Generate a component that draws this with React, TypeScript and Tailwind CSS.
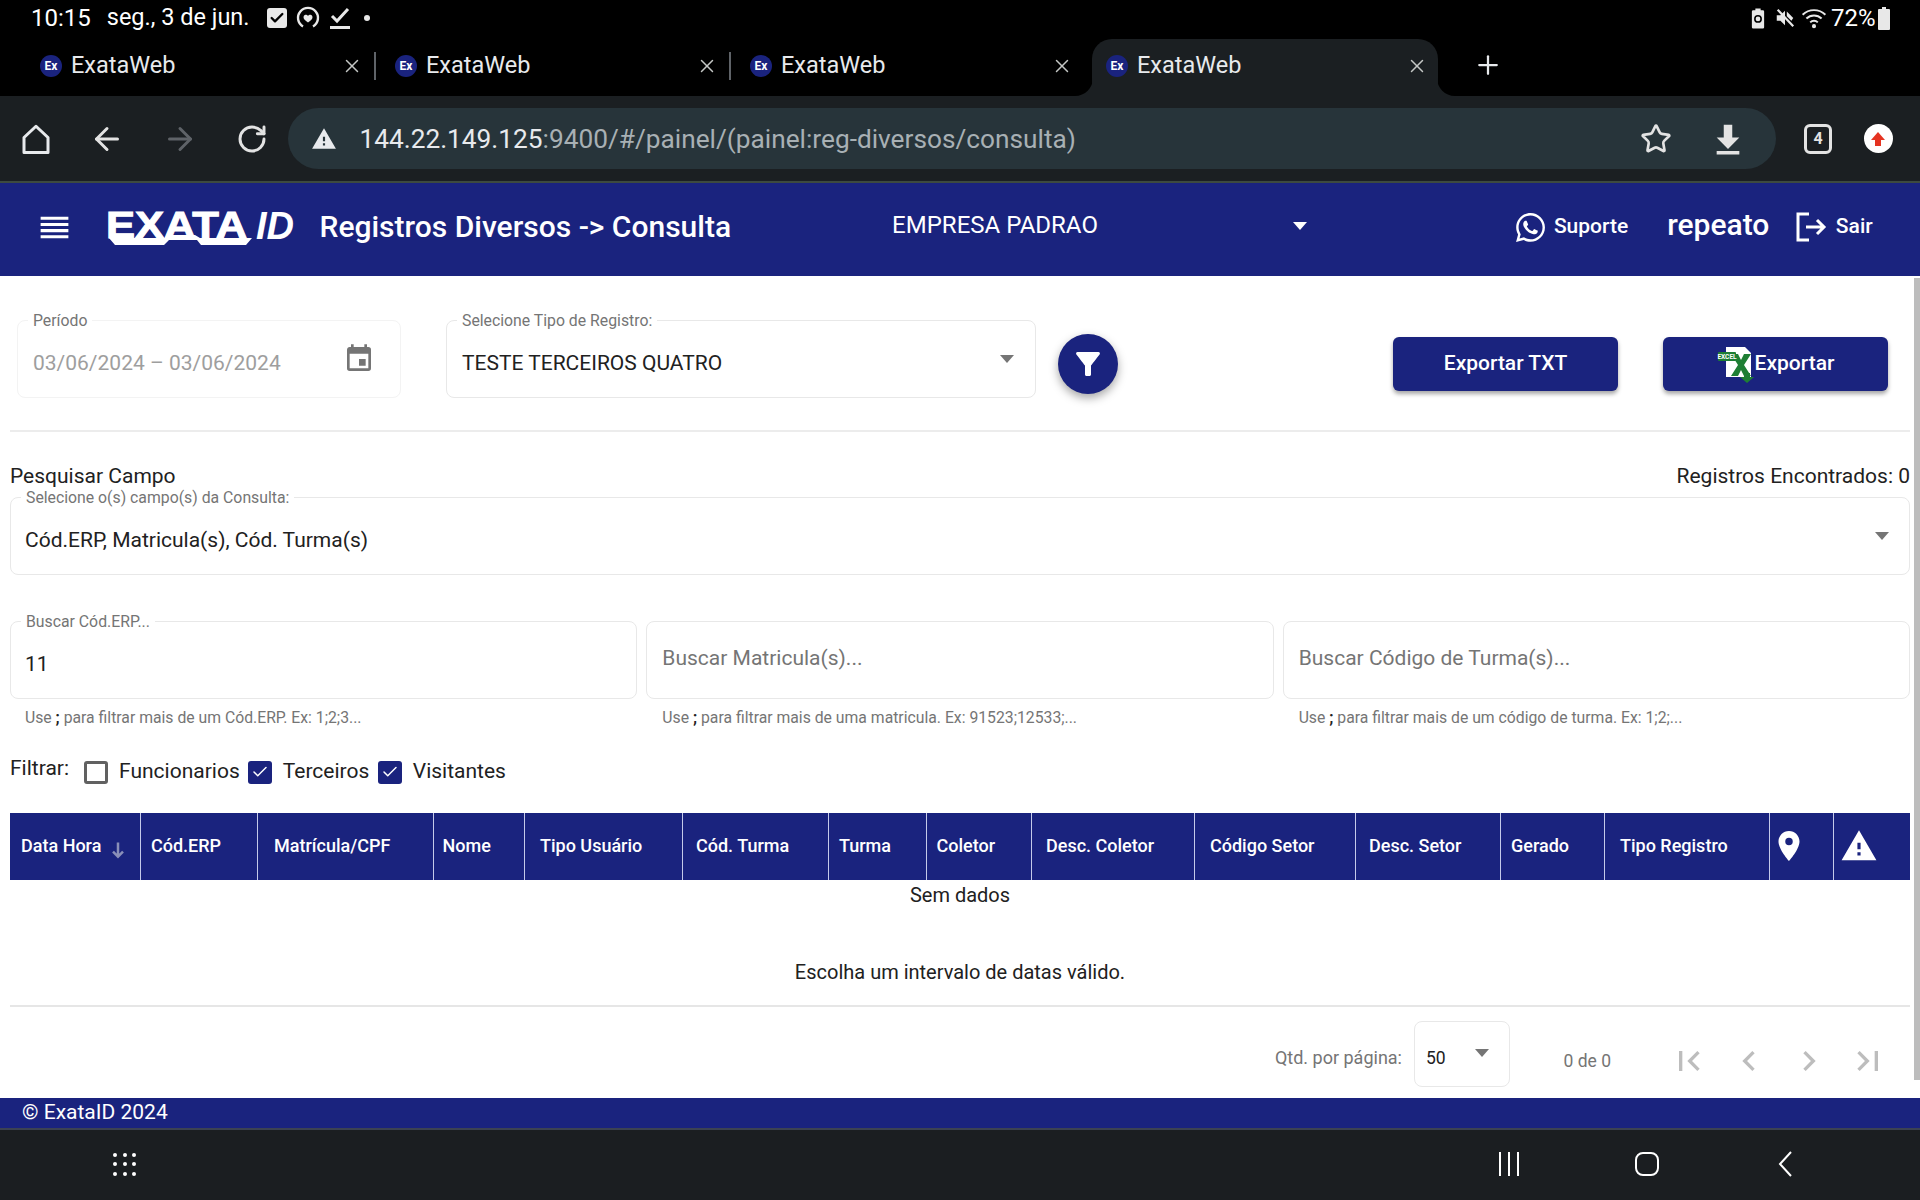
import { ReactNode } from 'react';
import { ArrowLeft, ArrowRight, Check, Plus, RotateCw, Star, X } from 'lucide-react';
import { FaWhatsapp } from 'react-icons/fa';

const tabs = [
  { w: 'w-[355px]', active: false },
  { w: 'w-[355px]', active: false },
  { w: 'w-[355px]', active: false },
];

const columns = [
  { label: 'Data Hora', cls: 'w-[131px] pl-[11px]', sort: true },
  { label: 'Cód.ERP', cls: 'w-[117px] pl-[10px]' },
  { label: 'Matrícula/CPF', cls: 'w-[175.5px] pl-[16px]' },
  { label: 'Nome', cls: 'w-[91.5px] pl-[9px]' },
  { label: 'Tipo Usuário', cls: 'w-[158px] pl-[15px]' },
  { label: 'Cód. Turma', cls: 'w-[146px] pl-[13px]' },
  { label: 'Turma', cls: 'w-[97.5px] pl-[10px]' },
  { label: 'Coletor', cls: 'w-[105.5px] pl-[10px]' },
  { label: 'Desc. Coletor', cls: 'w-[163px] pl-[14px]' },
  { label: 'Código Setor', cls: 'w-[161px] pl-[15px]' },
  { label: 'Desc. Setor', cls: 'w-[145px] pl-[13px]' },
  { label: 'Gerado', cls: 'w-[104px] pl-[10px]' },
  { label: 'Tipo Registro', cls: 'w-[164.5px] pl-[15px]' },
];

function Material({ d, className }: { d: string; className?: string }) {
  return (
    <svg viewBox="0 0 24 24" fill="currentColor" className={className}>
      <path d={d} />
    </svg>
  );
}

function Caret({ className }: { className?: string }) {
  return (
    <svg viewBox="0 0 14 8" fill="currentColor" className={className}>
      <path d="M0 0h14L7 8z" />
    </svg>
  );
}

function Favicon() {
  return (
    <span className="w-[22px] h-[22px] rounded-full bg-[#1a237e] flex items-center justify-center text-white text-[12px] font-bold leading-none shrink-0">
      Ex
    </span>
  );
}

function Tab({ w, last }: { w: string; last?: boolean }) {
  return (
    <div className={`${w} h-[57px] flex items-center pl-[19px] pb-[3px]`}>
      <Favicon />
      <span className="ml-[9px] text-[23.5px] text-[#e8eaed]">ExataWeb</span>
      <X className="ml-auto w-[22px] h-[22px] text-[#c4c7c5]" strokeWidth={1.6} />
      <span className={`ml-[11.5px] w-[2px] h-[28px] ${last ? 'bg-transparent' : 'bg-[#5f6368]'}`} />
    </div>
  );
}

function Logo() {
  return (
    <div className="relative w-[190px] h-[38px] ml-[33.5px] text-white">
      <div className="flex items-start font-['Liberation_Sans',sans-serif] text-[36px] leading-[36px]">
        <span className="w-[150px] font-bold origin-left scale-x-[1.21] [-webkit-text-stroke:1px_white]">EXATA</span>
        <span className="text-[38px] leading-[36px] font-bold italic">ID</span>
      </div>
      <svg viewBox="0 0 190 38" className="absolute left-0 top-0 w-[190px] h-[38px]" fill="#ffffff">
        <path d="M3 30h56l6-3h24l5 3h52l-6 7H95l-4-5H63l-5 5H9z" />
      </svg>
    </div>
  );
}

function Field({
  label,
  className,
  children,
}: {
  label?: string;
  className?: string;
  children: ReactNode;
}) {
  return (
    <div className={`relative border-[1.5px] rounded-[8px] flex items-center ${className}`}>
      {label && (
        <span className="absolute left-[10px] -top-[9px] px-[5px] bg-white text-[15.8px] leading-[18px] text-[#757575] whitespace-nowrap">
          {label}
        </span>
      )}
      {children}
    </div>
  );
}

function Checkbox({ label, checked }: { label: string; checked?: boolean }) {
  return (
    <div className="flex items-center">
      {checked ? (
        <span className="w-[24px] h-[23px] rounded-[3px] bg-[#1a237e] flex items-center justify-center">
          <Check className="w-[18px] h-[18px] text-white" strokeWidth={2} />
        </span>
      ) : (
        <span className="w-[24px] h-[23px] rounded-[3px] border-[3px] border-[#616161]" />
      )}
      <span className="ml-[11px] text-[21px] text-[#212121]">{label}</span>
    </div>
  );
}

function ExcelIcon() {
  return (
    <svg viewBox="0 0 38 38" className="w-[38px] h-[38px] shrink-0">
      <path d="M9 2h19l6 6v24H9z" fill="#ffffff" />
      <path d="M14 11h7l3 6 3-6h7l-7 11 7 11h-7l-3-6-3 6h-7l7-11z" fill="#1e7e34" transform="translate(0 -2)" />
      <rect x="1" y="7" width="18" height="9" rx="1" fill="#1e7e34" />
      <text x="10" y="14" textAnchor="middle" fontSize="6.5" fontWeight="700" fill="#ffffff" fontFamily="Roboto, sans-serif">
        EXCEL
      </text>
      <path d="M27 28h6v4h4l-7 6-7-6h4z" fill="#1e7e34" />
    </svg>
  );
}

export default function App() {
  return (
    <div className="w-[1920px] h-[1200px] overflow-hidden relative flex flex-col bg-white font-['Roboto',sans-serif]">
      {/* Status bar */}
      <div className="h-[39px] bg-black text-white flex items-center pl-[31px] pr-[30.5px] pb-[3px] shrink-0">
        <span className="text-[24px] leading-none">10:15</span>
        <span className="ml-[16px] text-[23.5px] leading-none">seg., 3 de jun.</span>
        <span className="ml-[17px] w-[20px] h-[20px] rounded-[3px] bg-[#e8e8e8] flex items-center justify-center">
          <Check className="w-[16px] h-[16px] text-black" strokeWidth={3.5} />
        </span>
        <svg viewBox="0 0 24 24" className="ml-[9px] w-[24px] h-[24px]" fill="none" stroke="#e8e8e8" strokeWidth="2.4">
          <path d="M7 20.5A10 10 0 1 1 17 20.5" />
          <path d="M12 16.5c-3-2-4.5-3.6-4.5-5.5a2.4 2.4 0 0 1 4.5-1 2.4 2.4 0 0 1 4.5 1c0 1.900-1.500 3.500-4.500 5.500z" fill="#e8e8e8" stroke="none" />
        </svg>
        <svg viewBox="0 0 24 24" className="ml-[8px] w-[24px] h-[24px]" fill="none" stroke="#e8e8e8" strokeWidth="3">
          <path d="M4 10l5 5L20 3" />
          <path d="M2 21.500h20" />
        </svg>
        <span className="ml-[12px] w-[6px] h-[6px] rounded-full bg-[#e8e8e8]" />
        <div className="ml-auto flex items-center">
          <svg viewBox="0 0 16 24" className="w-[14px] h-[22px]" fill="#e8e8e8">
            <path d="M5 1h6v2h2.500A1.500 1.500 0 0 1 15 4.500v18a1.500 1.500 0 0 1-1.500 1.500h-11A1.500 1.500 0 0 1 1 22.500v-18A1.500 1.500 0 0 1 2.500 3H5z" />
            <circle cx="8" cy="13" r="3.600" fill="none" stroke="#000" strokeWidth="1.800" />
          </svg>
          <svg viewBox="0 0 24 24" className="ml-[9px] w-[22px] h-[22px]" fill="#e8e8e8">
            <path d="M3 9v6h4l5 5V4L7 9z" />
            <path d="M4 3l17 18" stroke="#e8e8e8" strokeWidth="2.400" />
            <path d="M14 5l7 7-2 3-5-5z" />
          </svg>
          <svg viewBox="0 0 24 24" className="ml-[5px] w-[26px] h-[26px]" fill="none" stroke="#e8e8e8" strokeWidth="1.800">
            <path d="M1.500 9a15 15 0 0 1 21 0" />
            <path d="M5 12.500a10 10 0 0 1 14 0" />
            <path d="M8.500 16a5 5 0 0 1 7 0" />
            <circle cx="12" cy="19.500" r="1" fill="#e8e8e8" />
          </svg>
          <span className="ml-[3.5px] text-[24px] leading-none">72%</span>
          <svg viewBox="0 0 12 24" className="ml-[2px] w-[12px] h-[24px]" fill="#e8e8e8">
            <path d="M4 1h4v2h3a1 1 0 0 1 1 1v19a1 1 0 0 1-1 1H1a1 1 0 0 1-1-1V4a1 1 0 0 1 1-1h3z" />
          </svg>
        </div>
      </div>

      {/* Browser tabs */}
      <div className="h-[57px] bg-black flex items-start pl-[21px] shrink-0">
        {tabs.map((t, i) => (
          <Tab key={i} w={t.w} last={i === 2} />
        ))}
        <div className="relative ml-[6px] w-[346px] h-[57px] bg-[#1b1f22] rounded-t-[20px] flex items-center pl-[14px] pr-[10px] pb-[3px]">
          <svg viewBox="0 0 18 18" className="absolute -left-[17px] bottom-0 w-[18px] h-[18px]" fill="#1b1f22">
            <path d="M18 0v18H0c10 0 18-8 18-18z" />
          </svg>
          <svg viewBox="0 0 18 18" className="absolute -right-[17px] bottom-0 w-[18px] h-[18px]" fill="#1b1f22">
            <path d="M0 0v18h18C8 18 0 10 0 0z" />
          </svg>
          <Favicon />
          <span className="ml-[9px] text-[23.5px] text-[#e8eaed]">ExataWeb</span>
          <X className="ml-auto w-[22px] h-[22px] text-[#c4c7c5]" strokeWidth={1.6} />
        </div>
        <Plus className="ml-[35px] mt-[11px] w-[30px] h-[30px] text-[#e8eaed]" strokeWidth={1.8} />
      </div>

      {/* Browser toolbar */}
      <div className="h-[85px] bg-[#1b1f22] flex items-center pl-[18px] shrink-0 text-[#e3e3e3]">
        <svg viewBox="0 0 24 24" className="w-[36px] h-[36px]" fill="none" stroke="#e8eaed" strokeWidth="2">
          <path d="M12 3.500L4 11v10h16V11z" strokeLinejoin="round" />
        </svg>
        <ArrowLeft className="ml-[35px] w-[36px] h-[36px]" strokeWidth={2} />
        <ArrowRight className="ml-[37px] w-[36px] h-[36px] text-[#5f6368]" strokeWidth={2} />
        <RotateCw className="ml-[38px] w-[32px] h-[32px]" strokeWidth={2.2} />
        <div className="ml-[19.5px] w-[1488px] h-[61px] rounded-full bg-[#27343a] flex items-center pl-[23px] pr-[31px]">
          <Material d="M1 21h22L12 2 1 21zm12-3h-2v-2h2v2zm0-4h-2v-4h2v4z" className="w-[26px] h-[26px] text-[#e8eaed]" />
          <span className="ml-[23px] mt-[2px] text-[26.25px] whitespace-nowrap">
            <span className="text-[#e8eaed]">144.22.149.125</span>
            <span className="text-[#a8b0b4]">:9400/#/painel/(painel:reg-diversos/consulta)</span>
          </span>
          <Star className="ml-auto mr-[-1px] w-[32px] h-[32px]" strokeWidth={2} />
          <svg viewBox="0 0 24 24" className="ml-[40px] w-[34px] h-[34px]" fill="#e3e3e3">
            <path d="M9 2h6v9h5l-8 8-8-8h5zM4 20.500h16V23H4z" />
          </svg>
        </div>
        <div className="ml-[28.5px] w-[28px] h-[30px] rounded-[6px] border-[3px] border-[#e3e3e3] flex items-center justify-center text-[16px] font-bold leading-none">
          4
        </div>
        <div className="ml-[31.5px] w-[29px] h-[29px] rounded-full bg-white flex items-center justify-center">
          <svg viewBox="0 0 16 16" className="w-[16px] h-[16px]" fill="#e53321">
            <path d="M8 1l7 8h-4v6H5V9H1z" />
          </svg>
        </div>
      </div>
      <div className="h-[2px] bg-[#3d4a3f] shrink-0" />

      {/* App header */}
      <header className="h-[93px] bg-[#1a237e] text-white flex items-center pl-[35.5px] pb-[5px] shrink-0">
        <Material d="M3 15h18v-2H3v2zm0 4h18v-2H3v2zm0-8h18V9H3v2zm0-6v2h18V5H3z" className="w-[37px] h-[37px]" />
        <Logo />
        <h1 className="ml-[23.5px] mb-[2px] text-[30px] font-medium whitespace-nowrap">Registros Diversos -&gt; Consulta</h1>
        <span className="ml-[161px] mb-[5px] text-[24px] whitespace-nowrap">EMPRESA PADRAO</span>
        <Caret className="ml-[195.5px] mb-[3px] w-[14px] h-[8px]" />
        <FaWhatsapp className="ml-[206.5px] w-[33px] h-[33px]" />
        <span className="ml-[7px] text-[21px] font-medium">Suporte</span>
        <span className="ml-[39px] mb-[5px] text-[30px] font-medium">repeato</span>
        <svg viewBox="0 0 32 32" className="ml-[26px] w-[32px] h-[32px]" fill="none" stroke="#ffffff" strokeWidth="3">
          <path d="M14 3H3v26h11" />
          <path d="M11 16h18M22 9l7 7-7 7" />
        </svg>
        <span className="ml-[8.5px] text-[21px] font-medium">Sair</span>
      </header>

      {/* Overlay scrollbar */}
      <div className="absolute right-0 top-[278px] w-[6px] h-[802px] bg-[#bdbdbd]" />

      {/* Page content */}
      <main className="flex-1 px-[10px] flex flex-col">
        <div className="h-[156px] shrink-0 flex items-start border-b-2 border-[#ececec] pt-[44px]">
          <Field label="Período" className="ml-[7px] w-[384px] h-[78px] border-[#f3f3f3] pl-[15px] pr-[25px] justify-between">
            <span className="mt-[10px] text-[21px] text-[#9e9e9e]">03/06/2024 – 03/06/2024</span>
            <Material
              d="M17 12h-5v5h5v-5zM16 1v2H8V1H6v2H5c-1.110 0-1.990.9-1.990 2L3 19a2 2 0 0 0 2 2h14a2 2 0 0 0 2-2V5a2 2 0 0 0-2-2h-1V1h-2zm3 18H5V8h14v11z"
              className="w-[32px] h-[32px] text-[#757575]"
            />
          </Field>
          <Field label="Selecione Tipo de Registro:" className="ml-[45px] w-[590px] h-[78px] border-[#e8e8e8] pl-[15px] pr-[21px] justify-between">
            <span className="mt-[10px] text-[21px] text-[#212121]">TESTE TERCEIROS QUATRO</span>
            <Caret className="w-[14px] h-[8px] text-[#757575]" />
          </Field>
          <button className="ml-[22px] mt-[14px] w-[60px] h-[60px] rounded-full bg-[#1a237e] text-white flex items-center justify-center shadow-[0_4px_10px_rgba(0,0,0,0.35)]">
            <Material
              d="M4.250 5.610C6.270 8.200 10 13 10 13v6c0 .55.45 1 1 1h2c.55 0 1-.45 1-1v-6s3.720-4.800 5.740-7.390A1 1 0 0 0 18.950 4H5.040a1 1 0 0 0-.79 1.610z"
              className="w-[36px] h-[36px]"
            />
          </button>
          <button className="ml-auto mt-[17px] w-[225px] h-[54px] rounded-[6px] bg-[#1a237e] text-white text-[21px] font-medium shadow-[0_3px_4px_rgba(0,0,0,0.35)]">
            Exportar TXT
          </button>
          <button className="ml-[45px] mr-[22px] mt-[17px] w-[225px] h-[54px] rounded-[6px] bg-[#1a237e] text-white text-[21px] font-medium shadow-[0_3px_4px_rgba(0,0,0,0.35)] flex items-center justify-center">
            <ExcelIcon />
            <span>Exportar</span>
          </button>
        </div>

        <div className="h-[65px] shrink-0 flex justify-between items-end pb-[9px] text-[21px] leading-[24px] text-[#212121]">
          <span>Pesquisar Campo</span>
          <span>Registros Encontrados: 0</span>
        </div>
        <Field label="Selecione o(s) campo(s) da Consulta:" className="h-[78px] shrink-0 border-[#e8e8e8] pl-[14px] pr-[20px] justify-between">
          <span className="mt-[9px] text-[21px] text-[#212121]">Cód.ERP, Matricula(s), Cód. Turma(s)</span>
          <Caret className="w-[14px] h-[8px] text-[#757575]" />
        </Field>

        <div className="mt-[46px] grid grid-cols-3 gap-x-[9px] shrink-0">
          <Field label="Buscar Cód.ERP..." className="h-[78px] border-[#e8e8e8] pl-[14px]">
            <span className="mt-[10px] text-[21px] text-[#212121]">11</span>
          </Field>
          <Field className="h-[78px] border-[#e8e8e8] pl-[15px]">
            <span className="mb-[2px] text-[21px] text-[#757575]">Buscar Matricula(s)...</span>
          </Field>
          <Field className="h-[78px] border-[#e8e8e8] pl-[15px]">
            <span className="mb-[2px] text-[21px] text-[#757575]">Buscar Código de Turma(s)...</span>
          </Field>
          <p className="mt-[9px] px-[15px] text-[15.75px] leading-[20px] text-[#757575]">
            Use <b className="text-[#212121]">;</b> para filtrar mais de um Cód.ERP. Ex: 1;2;3...
          </p>
          <p className="mt-[9px] px-[16px] text-[15.75px] leading-[20px] text-[#757575]">
            Use <b className="text-[#212121]">;</b> para filtrar mais de uma matricula. Ex: 91523;12533;...
          </p>
          <p className="mt-[9px] px-[16px] text-[15.75px] leading-[20px] text-[#757575]">
            Use <b className="text-[#212121]">;</b> para filtrar mais de um código de turma. Ex: 1;2;...
          </p>
        </div>

        <div className="mt-[29px] h-[30px] shrink-0 flex items-center">
          <span className="mb-[6px] mr-[15px] text-[21px] text-[#212121]">Filtrar:</span>
          <div className="mr-[8px]"><Checkbox label="Funcionarios" /></div>
          <div className="mr-[8.5px]"><Checkbox label="Terceiros" checked /></div>
          <Checkbox label="Visitantes" checked />
        </div>

        <div className="mt-[26px] h-[67px] shrink-0 flex bg-[#1a237e] text-white text-[18px] font-medium">
          {columns.map((c) => (
            <div key={c.label} className={`${c.cls} pb-[3px] shrink-0 flex items-center border-r border-[#c5cae9] whitespace-nowrap`}>
              {c.label}
              {c.sort && (
                <svg viewBox="0 0 16 24" className="ml-[9px] mt-[9px] w-[16px] h-[20px] text-[#8a8fb8]" fill="none" stroke="currentColor" strokeWidth="3">
                  <path d="M8 3v17M2 14l6 6 6-6" />
                </svg>
              )}
            </div>
          ))}
          <div className="w-[64.5px] shrink-0 pl-[1.5px] flex items-center border-r border-[#c5cae9]">
            <Material d="M12 2C8.130 2 5 5.130 5 9c0 5.250 7 13 7 13s7-7.750 7-13c0-3.870-3.130-7-7-7zm0 9.500a2.500 2.500 0 0 1 0-5 2.500 2.500 0 0 1 0 5z" className="mb-[2px] w-[36px] h-[36px]" />
          </div>
          <div className="w-[76px] shrink-0 pl-[6px] flex items-center">
            <Material d="M1 21h22L12 2 1 21zm12-3h-2v-2h2v2zm0-4h-2v-4h2v4z" className="mb-[2px] w-[38px] h-[38px]" />
          </div>
        </div>

        <div className="h-[30px] shrink-0 flex items-center justify-center text-[20px] text-[#212121]">Sem dados</div>
        <div className="mt-[47px] h-[30px] shrink-0 flex items-center justify-center text-[20px] text-[#212121]">
          Escolha um intervalo de datas válido.
        </div>
        <div className="mt-[18px] flex-1 border-t-2 border-[#e6e6e6] flex justify-end items-start pr-[22px]">
          <span className="mt-[39px] text-[18px] leading-[24px] text-[#757575]">Qtd. por página:</span>
          <div className="ml-[12px] mt-[14px] w-[96px] h-[66px] border-[1.5px] border-[#e8e8e8] rounded-[8px] flex items-start pl-[11px] pr-[20px] pt-[24px] justify-between">
            <span className="text-[17.5px] leading-[24px] text-[#212121]">50</span>
            <Caret className="mt-[3px] w-[14px] h-[8px] text-[#757575]" />
          </div>
          <span className="ml-[53.5px] mt-[42px] text-[17.5px] leading-[24px] text-[#757575]">0 de 0</span>
          <Material d="M18.410 16.590L13.820 12l4.590-4.590L17 6l-6 6 6 6zM6 6h2v12H6z" className="ml-[58px] mt-[34px] w-[40px] h-[40px] text-[#bdbdbd]" />
          <Material d="M15.410 7.410L14 6l-6 6 6 6 1.410-1.410L10.830 12z" className="ml-[20px] mt-[34px] w-[40px] h-[40px] text-[#bdbdbd]" />
          <Material d="M10 6L8.590 7.410 13.170 12l-4.580 4.590L10 18l6-6z" className="ml-[19.5px] mt-[34px] w-[40px] h-[40px] text-[#bdbdbd]" />
          <Material d="M5.590 7.410L10.180 12l-4.590 4.590L7 18l6-6-6-6zM16 6h2v12h-2z" className="ml-[19.5px] mt-[34px] w-[40px] h-[40px] text-[#bdbdbd]" />
        </div>
      </main>

      <footer className="h-[30px] shrink-0 bg-[#1a237e] text-white text-[21px] leading-[28px] pl-[22px]">© ExataID 2024</footer>
      <div className="h-[2px] shrink-0 bg-[#3c4252]" />

      {/* Android nav bar */}
      <div className="h-[70px] shrink-0 bg-[#1b1e21] flex items-center text-white pb-[2px]">
        <div className="ml-[113px] grid grid-cols-3 gap-[5.5px]">
          {Array.from({ length: 9 }).map((_, i) => (
            <span key={i} className="w-[4px] h-[4px] rounded-full bg-white" />
          ))}
        </div>
        <div className="ml-[1362.5px] flex gap-[7px]">
          <span className="w-[2px] h-[24px] bg-white" />
          <span className="w-[2px] h-[24px] bg-white" />
          <span className="w-[2px] h-[24px] bg-white" />
        </div>
        <span className="ml-[116.5px] w-[24px] h-[24px] rounded-[8px] border-2 border-white" />
        <svg viewBox="0 0 16 28" className="ml-[118px] w-[16px] h-[28px]" fill="none" stroke="#ffffff" strokeWidth="2">
          <path d="M14 2L3 14l11 12" />
        </svg>
      </div>
    </div>
  );
}
